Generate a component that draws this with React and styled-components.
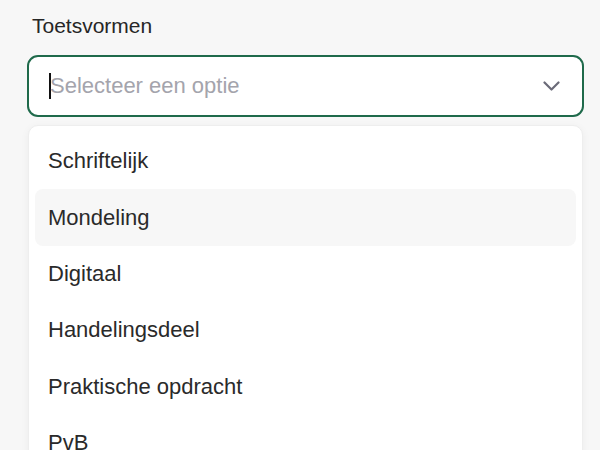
import React from 'react';
import styled, { createGlobalStyle } from 'styled-components';

const GlobalStyle = createGlobalStyle`
  html, body {
    margin: 0;
    padding: 0;
    background: #f7f7f7;
    overflow: hidden;
  }

  body {
    font-family: 'Liberation Sans', Arial, sans-serif;
  }
`;

const Page = styled.div`
  width: 600px;
  height: 450px;
  box-sizing: border-box;
  padding: 13px 16px 0 27px;
  overflow: hidden;
`;

const Label = styled.div`
  font-size: 21px;
  line-height: 26px;
  color: #262626;
  padding-left: 5px;
  margin-bottom: 16px;
`;

const Field = styled.div`
  height: 62px;
  box-sizing: border-box;
  border: 2px solid #1f6a4b;
  border-radius: 11px;
  background: #fff;
  display: flex;
  align-items: center;
  padding: 0 22px 0 20px;
`;

const Caret = styled.span`
  width: 2px;
  height: 26px;
  background: #111;
`;

const Placeholder = styled.span`
  flex: 1;
  font-size: 22px;
  color: #a4a4ac;
  margin-left: -1px;
`;

const Chevron = styled.svg`
  width: 17px;
  height: 10px;
  color: #6b6b78;
`;

const Menu = styled.div`
  margin: 8px 1px 0 1px;
  background: #fff;
  border: 1px solid #eeeeee;
  border-radius: 10px;
  box-shadow: 0 2px 8px rgba(0, 0, 0, 0.05);
  padding: 7px 6px;
  display: flex;
  flex-direction: column;
`;

const Option = styled.div`
  height: 56.4px;
  flex-shrink: 0;
  display: flex;
  align-items: center;
  padding-left: 13px;
  border-radius: 8px;
  font-size: 22px;
  color: #2a2a2a;
  background: ${(p) => (p.$active ? '#f7f7f7' : 'transparent')};
`;

const options = [
  'Schriftelijk',
  'Mondeling',
  'Digitaal',
  'Handelingsdeel',
  'Praktische opdracht',
  'PvB',
];

export default function App() {
  return (
    <>
      <GlobalStyle />
      <Page>
        <Label>Toetsvormen</Label>
        <Field>
          <Caret />
          <Placeholder>Selecteer een optie</Placeholder>
          <Chevron viewBox="0 0 17 10" fill="none">
            <path
              d="M1.5 1.5l7 7 7-7"
              stroke="currentColor"
              strokeWidth="2.2"
              strokeLinecap="round"
              strokeLinejoin="round"
            />
          </Chevron>
        </Field>
        <Menu>
          {options.map((o) => (
            <Option key={o} $active={o === 'Mondeling'}>
              {o}
            </Option>
          ))}
        </Menu>
      </Page>
    </>
  );
}
